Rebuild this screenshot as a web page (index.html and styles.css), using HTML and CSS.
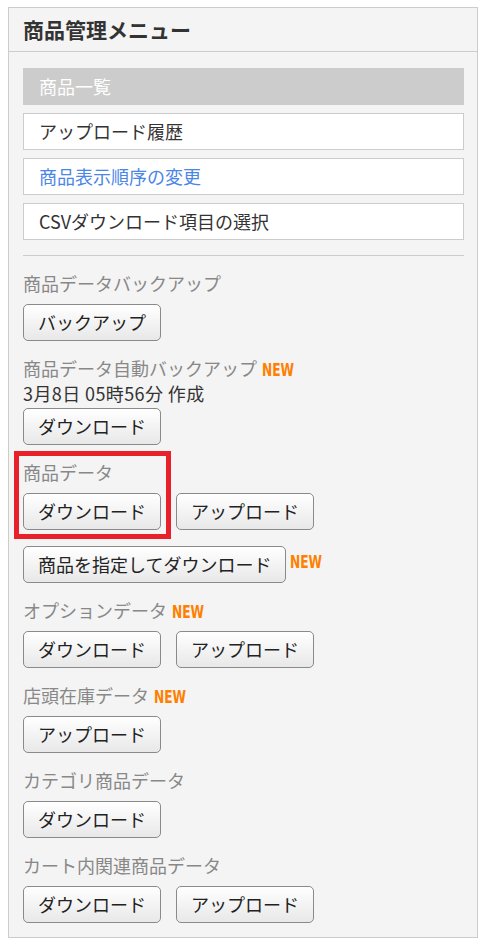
FILE: index.html
```html
<!DOCTYPE html>
<html lang="ja">
<head>
    <meta charset="UTF-8">
    <meta name="viewport" content="width=device-width, initial-scale=1.0">
    <title>商品管理メニュー</title>
    <link rel="stylesheet" href="styles.css">
</head>
<body>
    <div class="panel">
        <h2 class="panel-title">商品管理メニュー</h2>

        <div class="panel-body">
            <ul class="menu">
                <li class="menu-item active">商品一覧</li>
                <li class="menu-item">アップロード履歴</li>
                <li class="menu-item link">商品表示順序の変更</li>
                <li class="menu-item">CSVダウンロード項目の選択</li>
            </ul>

            <hr class="divider">

            <div class="section">
                <div class="label">商品データバックアップ</div>
                <div class="buttons">
                    <button class="btn">バックアップ</button>
                </div>
            </div>

            <div class="section">
                <div class="label">商品データ自動バックアップ<span class="new">NEW</span></div>
                <div class="date">3月8日 05時56分 作成</div>
                <div class="buttons">
                    <button class="btn">ダウンロード</button>
                </div>
            </div>

            <div class="section">
                <div class="highlight"></div>
                <div class="label">商品データ</div>
                <div class="buttons">
                    <button class="btn">ダウンロード</button>
                    <button class="btn">アップロード</button>
                </div>
                <div class="buttons extra">
                    <button class="btn">商品を指定してダウンロード</button><span class="new">NEW</span>
                </div>
            </div>

            <div class="section">
                <div class="label">オプションデータ<span class="new">NEW</span></div>
                <div class="buttons">
                    <button class="btn">ダウンロード</button>
                    <button class="btn">アップロード</button>
                </div>
            </div>

            <div class="section">
                <div class="label">店頭在庫データ<span class="new">NEW</span></div>
                <div class="buttons">
                    <button class="btn">アップロード</button>
                </div>
            </div>

            <div class="section">
                <div class="label">カテゴリ商品データ</div>
                <div class="buttons">
                    <button class="btn">ダウンロード</button>
                </div>
            </div>

            <div class="section">
                <div class="label">カート内関連商品データ</div>
                <div class="buttons">
                    <button class="btn">ダウンロード</button>
                    <button class="btn">アップロード</button>
                </div>
            </div>
        </div>
    </div>
</body>
</html>
```

FILE: styles.css
```css
body {
    font-family: "Noto Sans CJK JP", "Noto Sans", sans-serif;
    background-color: #fff;
    color: #333;
    margin: 7px 8px;
}

.panel {
    box-sizing: border-box;
    width: 470px;
    background-color: #f4f4f4;
    border: 1px solid #ccc;
}

.panel-title {
    margin: 0;
    padding: 0 14px;
    height: 43px;
    line-height: 43px;
    font-size: 21px;
    font-weight: bold;
    color: #333;
    border-bottom: 1px solid #ccc;
}

.panel-body {
    padding: 16px 13px 14px 14px;
}

.menu {
    list-style: none;
    margin: 0;
    padding: 0;
    display: flex;
    flex-direction: column;
    gap: 8px;
}

.menu-item {
    height: 35px;
    line-height: 35px;
    padding: 0 15px;
    font-size: 18px;
    color: #333;
    background-color: #fff;
    border: 1px solid #ccc;
}

.menu-item.active {
    background-color: #ccc;
    color: #fff;
}

.menu-item.link {
    color: #4a86e8;
}

.divider {
    margin: 15px 0 0;
    border: none;
    border-top: 1px solid #ccc;
    height: 0;
}

.section {
    position: relative;
    margin-top: 15px;
}

.label {
    height: 25px;
    font-size: 18px;
    line-height: 25px;
    color: #888;
    margin-bottom: 8px;
}

.date {
    height: 25px;
    font-size: 18px;
    line-height: 25px;
    letter-spacing: 0.4px;
    color: #333;
    margin-top: -8px;
    margin-bottom: 2px;
}

.new {
    display: inline-block;
    font-family: "DejaVu Sans", sans-serif;
    font-weight: bold;
    font-size: 17px;
    line-height: 16px;
    color: #ff7f00;
    transform: scaleX(0.72);
    transform-origin: left bottom;
    vertical-align: baseline;
    position: relative;
    left: 5px;
}

.buttons {
    display: flex;
    align-items: center;
    gap: 15px;
}

.buttons.extra {
    align-items: flex-start;
    gap: 4px;
    margin-top: 16px;
}

.buttons.extra .new {
    margin-top: 8px;
    left: 0;
}

.btn {
    font-family: "Noto Sans CJK JP", "Noto Sans", sans-serif;
    font-size: 18px;
    line-height: 21px;
    height: 37px;
    padding: 7px 14px;
    color: #222;
    background: linear-gradient(#fff, #e8e8e8);
    border: 1px solid #8a8a8a;
    border-radius: 5px;
    cursor: pointer;
}

.highlight {
    position: absolute;
    top: -9px;
    left: -9px;
    width: 157px;
    height: 88px;
    box-sizing: border-box;
    border: 5px solid #e8202a;
    pointer-events: none;
}
```
